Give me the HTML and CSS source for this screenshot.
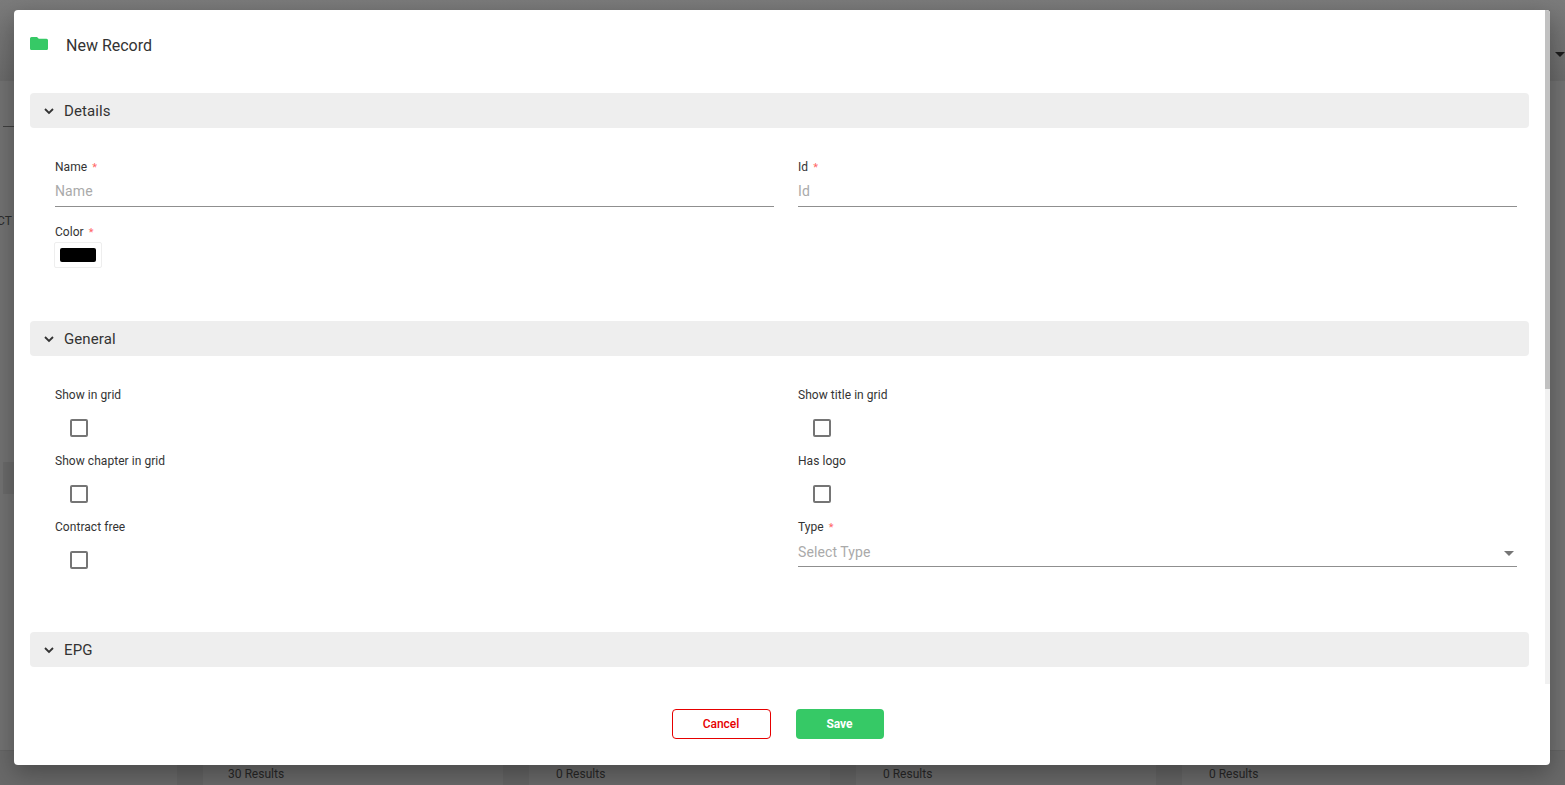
FILE: index.html
```html
<!DOCTYPE html>
<html lang="en">
<head>
<meta charset="utf-8">
<title>New Record</title>
<link rel="stylesheet" href="styles.css">
</head>
<body>
<div class="page">
  <header class="page-top"><span class="top-caret"></span></header>
  <main class="page-main">
    <div class="side-rule"></div>
    <div class="side-text">CT</div>
    <div class="side-block"></div>
  </main>
  <footer class="page-foot">
    <div class="foot-col"><span class="foot-tab"></span><span class="foot-text first">30 Results</span></div>
    <div class="foot-col"><span class="foot-tab"></span><span class="foot-text">0 Results</span></div>
    <div class="foot-col"><span class="foot-tab"></span><span class="foot-text">0 Results</span></div>
    <div class="foot-col"><span class="foot-tab"></span><span class="foot-text">0 Results</span></div>
  </footer>
</div>

<div class="modal">
  <div class="modal-scroll">
    <div class="modal-head">
      <svg class="folder" viewBox="0 0 18 13" aria-hidden="true"><path d="M1.5 0H7l1.8 1.7h7.7A1.5 1.5 0 0 1 18 3.2v8.3a1.5 1.5 0 0 1-1.5 1.5h-15A1.5 1.5 0 0 1 0 11.5v-10A1.5 1.5 0 0 1 1.5 0z"/></svg>
      <h1 class="modal-title">New Record</h1>
    </div>

    <section class="section">
      <div class="bar">
        <svg class="chev" viewBox="0 0 10 6" aria-hidden="true"><path d="M1 1l4 4 4-4"/></svg>
        <span class="bar-text">Details</span>
      </div>
      <div class="grid details">
        <div class="field">
          <div class="label">Name <span class="req">*</span></div>
          <div class="input"><span class="ph">Name</span></div>
        </div>
        <div class="field">
          <div class="label">Id <span class="req">*</span></div>
          <div class="input"><span class="ph">Id</span></div>
        </div>
        <div class="field color-field">
          <div class="label">Color <span class="req">*</span></div>
          <div class="swatch"><span class="swatch-fill"></span></div>
        </div>
      </div>
    </section>

    <section class="section">
      <div class="bar">
        <svg class="chev" viewBox="0 0 10 6" aria-hidden="true"><path d="M1 1l4 4 4-4"/></svg>
        <span class="bar-text">General</span>
      </div>
      <div class="grid general">
        <div class="field">
          <div class="label">Show in grid</div>
          <span class="check"></span>
        </div>
        <div class="field">
          <div class="label">Show title in grid</div>
          <span class="check"></span>
        </div>
        <div class="field">
          <div class="label">Show chapter in grid</div>
          <span class="check"></span>
        </div>
        <div class="field">
          <div class="label">Has logo</div>
          <span class="check"></span>
        </div>
        <div class="field">
          <div class="label">Contract free</div>
          <span class="check"></span>
        </div>
        <div class="field">
          <div class="label">Type <span class="req">*</span></div>
          <div class="input select"><span class="ph">Select Type</span><span class="select-caret"></span></div>
        </div>
      </div>
    </section>

    <section class="section">
      <div class="bar">
        <svg class="chev" viewBox="0 0 10 6" aria-hidden="true"><path d="M1 1l4 4 4-4"/></svg>
        <span class="bar-text">EPG</span>
      </div>
    </section>
    <div class="scroll-track"><div class="scroll-thumb"></div></div>
  </div>

  <div class="modal-foot">
    <button class="btn cancel" type="button">Cancel</button>
    <button class="btn save" type="button">Save</button>
  </div>
</div>
</body>
</html>
```
FILE: styles.css
```css
* { box-sizing: border-box; }
html, body { margin: 0; height: 100%; overflow: hidden; }
body { font-family: Roboto, "Liberation Sans", sans-serif; color: #333; background: #707070; }

.page { height: 785px; display: flex; flex-direction: column; }
.page-top {
  height: 81px; flex: none; display: flex; justify-content: flex-end; align-items: center;
  background: linear-gradient(#7b7b7b, #6a6a6a);
}
.top-caret {
  margin: 28px 0 0 0; width: 0; height: 0;
  border-left: 5px solid transparent; border-right: 5px solid transparent; border-top: 5px solid #1d1d1d;
}
.page-main { flex: 1; position: relative; background: #727272; }
.side-rule { position: absolute; left: 3px; top: 45px; width: 11px; height: 1px; background: #3f3f3f; }
.side-text { position: absolute; left: -3px; top: 133px; font-size: 12px; line-height: 14px; color: #2c2c2c; }
.side-block { position: absolute; left: 3px; top: 381px; width: 11px; height: 32px; background: #6a6a6a; }
.page-foot {
  height: 35px; flex: none; display: grid; grid-template-columns: 326px 327px 326px 409px;
  padding-left: 177px; background: #696969; border-top: 1px solid #646464;
}
.foot-col { display: flex; }
.foot-tab { width: 26px; height: 100%; background: #636363; }
.foot-text { margin: 16px 0 0 27px; font-size: 12px; line-height: 14px; color: #262626; }
.foot-text.first { margin-left: 25px; }

.modal {
  position: absolute; left: 14px; top: 10px; width: 1536px; height: 755px;
  display: flex; flex-direction: column; background: #fff; border-radius: 4px; overflow: hidden;
  box-shadow: 0 8px 24px rgba(0, 0, 0, .3);
}
.modal-scroll { height: 674px; flex: none; overflow: hidden; position: relative; }
.scroll-track { position: absolute; right: 0; top: 0; bottom: 0; width: 5px; background: #f1f1f1; }
.scroll-thumb { height: 379px; background: #c1c1c1; }

.modal-head { height: 83px; padding: 27px 0 0 16px; display: flex; align-items: flex-start; }
.folder { width: 18px; height: 13px; fill: #36c966; display: block; }
.modal-title { margin: 0 0 0 18px; font-size: 16px; line-height: 17px; font-weight: 400; color: #333; }

.section { margin: 0 21px 0 16px; }
.bar {
  height: 35px; display: flex; align-items: center; padding-left: 14px;
  background: #eee; border-radius: 4px;
}
.chev { width: 10px; height: 6px; overflow: visible; fill: none; stroke: #333; stroke-width: 1.8; }
.bar-text { margin-left: 10px; font-size: 15px; font-weight: 400; letter-spacing: .1px; color: #333; }

.grid {
  display: grid; grid-template-columns: 719px 719px; column-gap: 24px;
  padding-left: 25px;
}
.details { padding-top: 32px; height: 193px; grid-auto-rows: 65px; }
.general { padding-top: 32px; height: 276px; grid-auto-rows: 66px; }

.label { height: 14px; font-size: 12px; line-height: 14px; color: #333; letter-spacing: .05px; }
.req { margin-left: 2px; color: #f66; font-size: 11px; line-height: 1; }
.input {
  height: 33px; padding-top: 9px; border-bottom: 1px solid #8f8f8f;
  font-size: 14px; line-height: 17px; position: relative;
}
.ph { color: #aaa; letter-spacing: .1px; }
.general .select { padding-top: 10px; }
.select-caret {
  position: absolute; right: 3px; top: 17px; width: 0; height: 0;
  border-left: 5px solid transparent; border-right: 5px solid transparent; border-top: 5px solid #757575;
}
.color-field .label { margin-bottom: 3px; }
.swatch {
  width: 48px; height: 26px; margin-left: -1px; padding: 5px;
  border: 1px solid #eee; border-radius: 2px; background: #fff;
}
.swatch-fill { display: block; width: 36px; height: 14px; background: #000; border-radius: 2px; }
.check {
  display: block; width: 18px; height: 18px; margin: 17px 0 0 15px;
  border: 2px solid #757575; border-radius: 2px; background: #fff;
}

.modal-foot { flex: 1; display: flex; justify-content: center; padding: 25px 9px 0 0; gap: 25px; }
.btn {
  height: 30px; border-radius: 4px; font-family: Roboto, "Liberation Sans", sans-serif;
  font-size: 12px; font-weight: 500; padding: 0; cursor: pointer;
}
.cancel { width: 99px; background: #fff; border: 1px solid #e60000; color: #e60000; }
.save { width: 88px; background: #36c966; border: 0; color: #fff; font-weight: 700; }
```
